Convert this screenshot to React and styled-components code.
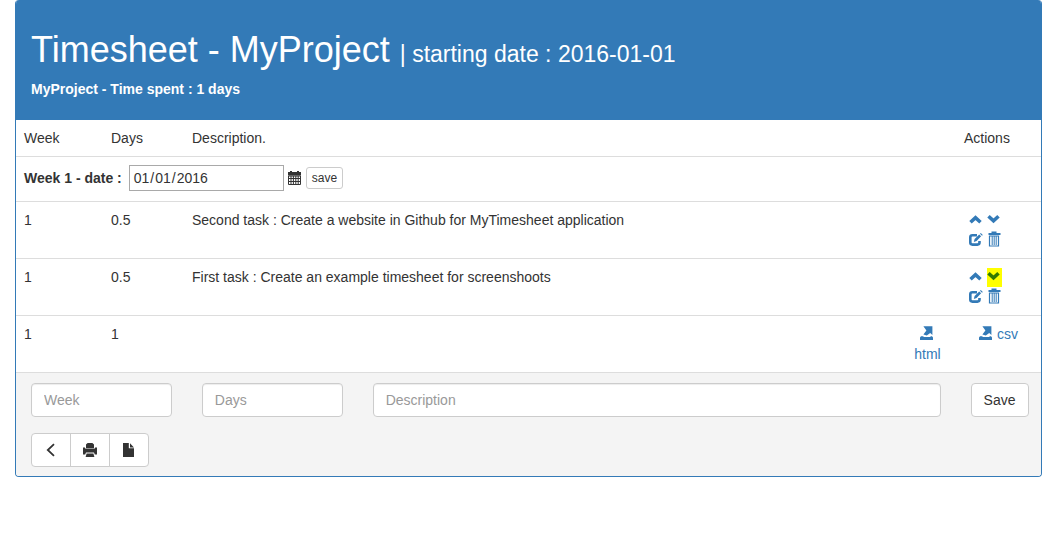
import React from "react";
import styled, { createGlobalStyle } from "styled-components";

const GlobalStyle = createGlobalStyle`
  *, *::before, *::after { box-sizing: border-box; }
  body {
    margin: 0;
    background: #fff;
    color: #333;
    font-family: Arial, "Liberation Sans", sans-serif;
    font-size: 14px;
    line-height: 20px;
  }
  button, input { font: inherit; color: inherit; margin: 0; }
`;

const Panel = styled.main`
  margin: 0 14px 20px 15px;
  border: 1px solid #337ab7;
  border-top: 0;
  border-radius: 4px;
  overflow: hidden;
`;

const Heading = styled.header`
  padding: 30px 15px 21px;
  background: #337ab7;
  color: #fff;
`;

const Title = styled.h1`
  margin: 0 0 10px;
  font-size: 36px;
  line-height: 39px;
  font-weight: 400;
`;

const StartDate = styled.small`
  font-size: 23px;
  line-height: 24px;
`;

const Summary = styled.p`
  margin: 0;
  font-weight: 700;
`;

const Table = styled.table`
  width: 100%;
  table-layout: fixed;
  border-collapse: separate;
  border-spacing: 0;
`;

const Col = styled.col`
  width: ${(p) => p.$width || "auto"};
`;

const Cell = styled.td`
  padding: 8px;
  border-top: 1px solid #ddd;
  text-align: ${(p) => (p.$center ? "center" : "left")};
  vertical-align: top;
`;

const HeadCell = styled.th`
  padding: 8px;
  font-weight: 400;
  text-align: left;
`;

const DateForm = styled.form`
  display: flex;
  align-items: center;
  gap: 4px;
  padding-bottom: 2px;
`;

const DateLabel = styled.label`
  padding-right: 3px;
  font-weight: 700;
`;

const DateInput = styled.input`
  width: 155px;
  height: 26px;
  padding: 0 3px;
  border: 1px solid #a9a9a9;
  background: #fff;
  outline: 0;
  &::-webkit-calendar-picker-indicator { display: none; }
`;

const Button = styled.button`
  padding: 6px 12px;
  border: 1px solid #ccc;
  border-radius: 4px;
  background: #fff;
  white-space: nowrap;
  cursor: pointer;
`;

const SmallButton = styled(Button)`
  padding: 1px 5px;
  border-radius: 3px;
  font-size: 12px;
  line-height: 18px;
`;

const Actions = styled.div`
  display: grid;
  grid-template-columns: 14px 15px;
  grid-auto-rows: 20px;
  align-items: center;
  gap: 0 4px;
  padding-left: 5px;
`;

const IconLink = styled.a`
  display: flex;
  align-items: center;
  height: 19px;
  color: ${(p) => (p.$marked ? "#337a00" : "#337ab7")};
  background: ${(p) => (p.$marked ? "#ff0" : "transparent")};
`;

const ExportLink = styled.a`
  color: #337ab7;
  text-decoration: none;
`;

const Glyph = styled.svg`
  width: 14px;
  height: 14px;
  flex: none;
  overflow: visible;
  vertical-align: -2px;
  fill: currentColor;
`;

const Footer = styled.footer`
  padding: 10px 0 9px;
  border-top: 1px solid #ddd;
  background: #f4f4f4;
`;

const TaskForm = styled.form`
  display: grid;
  grid-template-columns: minmax(0, 2fr) minmax(0, 2fr) minmax(0, 7fr) minmax(0, 1fr);
  margin-bottom: 16px;
`;

const Field = styled.div`
  padding: 0 15px;
`;

const TextInput = styled.input`
  display: block;
  width: 100%;
  height: 34px;
  padding: 6px 12px;
  border: 1px solid #ccc;
  border-radius: 4px;
  background: #fff;
  box-shadow: inset 0 1px 1px rgba(0, 0, 0, 0.075);
  outline: 0;
  &::placeholder { color: #999; opacity: 1; }
`;

const ButtonGroup = styled.div`
  display: flex;
  padding: 0 15px;
`;

const GroupButton = styled(Button)`
  display: flex;
  align-items: center;
  height: 34px;
  border-radius: 0;
  & + & { margin-left: -1px; }
  &:first-child { border-radius: 4px 0 0 4px; }
  &:last-child { border-radius: 0 4px 4px 0; }
`;

const icons = {
  up: <path d="M1.5 9.2 6.5 4.6l5 4.6" fill="none" stroke="currentColor" strokeWidth="3.6" />,
  down: <path d="M1.5 3.2 6.5 7.8l5-4.6" fill="none" stroke="currentColor" strokeWidth="3.6" />,
  edit: (
    <>
      <path
        d="M8 2.2H3.4Q1.3 2.2 1.3 4.2v5.4q0 2 2.1 2h5q2.1 0 2.1-2V8"
        fill="none"
        stroke="currentColor"
        strokeWidth="2.6"
      />
      <path d="M4.8 9 5.6 6l4.6-4.6 1.9 1.9L7.6 8ZM11 .7l.8-.8 2 2-.8.8Z" />
    </>
  ),
  trash: (
    <>
      <path d="M4.5-1.5h5v1.5h4v2h-12v-2h3Z" />
      <path d="M2.5 3h9v10h-9Z" fill="none" stroke="currentColor" strokeWidth="1.2" />
      <path d="M5.2 3v9M7.2 3v9M9.2 3v9" stroke="currentColor" strokeWidth="1" />
    </>
  ),
  export: (
    <>
      <path d="M3.4-.8H12.4V8L10.2 6 6.8 8.4 3.4 7.4 6.4 3.4 5.2 1.8Z" />
      <path d="M1 9.2h2l1 .8h6l1-.8h1l1 1.2V13H0v-2.6Z" />
    </>
  ),
  calendar: (
    <>
      <path d="M0 1h2V0h2v1h5V0h2v1h2v3.4H0Z" />
      <path
        d="M.5 5v8.5h12V5ZM0 7.5h13M0 10.5h13M3 5v8M5.4 5v8M7.8 5v8M10.2 5v8"
        fill="none"
        stroke="currentColor"
        strokeWidth="1"
      />
    </>
  ),
  back: <path d="M10 1.2 3.8 7l6.2 5.8" fill="none" stroke="currentColor" strokeWidth="1.8" />,
  print: (
    <>
      <path d="M4.6 0h4.8L11 1.6V5H3V1.6Z" />
      <path d="M0 4.4h2V5.4h10V4.4h2v7.1h-2.2L11 9.4H3l-.8 2.1H0Z" />
      <path d="M3.6 10.6h6.8l1 3.4H2.6Z" />
    </>
  ),
  file: <path d="M1 0H6.8v5.2H12V14H1ZM8 .3 12 4.4H8Z" />,
};

const Icon = ({ name }) => (
  <Glyph viewBox="0 0 14 14" aria-hidden="true">
    {icons[name]}
  </Glyph>
);

const tasks = [
  {
    week: 1,
    days: 0.5,
    text: "Second task : Create a website in Github for MyTimesheet application",
  },
  {
    week: 1,
    days: 0.5,
    text: "First task : Create an example timesheet for screenshoots",
    marked: true,
  },
];

const TaskRow = ({ task }) => (
  <tr>
    <Cell>{task.week}</Cell>
    <Cell>{task.days}</Cell>
    <Cell colSpan={2}>{task.text}</Cell>
    <Cell>
      <Actions>
        <IconLink href="#up" aria-label="Move up"><Icon name="up" /></IconLink>
        <IconLink href="#down" aria-label="Move down" $marked={task.marked}>
          <Icon name="down" />
        </IconLink>
        <IconLink href="#edit" aria-label="Edit"><Icon name="edit" /></IconLink>
        <IconLink href="#delete" aria-label="Delete"><Icon name="trash" /></IconLink>
      </Actions>
    </Cell>
  </tr>
);

export default function App() {
  return (
    <>
      <GlobalStyle />
      <Panel>
        <Heading>
          <Title>
            Timesheet - MyProject <StartDate>| starting date : 2016-01-01</StartDate>
          </Title>
          <Summary>MyProject - Time spent : 1 days</Summary>
        </Heading>
        <Table>
          <colgroup>
            <Col $width="87px" />
            <Col $width="81px" />
            <Col />
            <Col $width="57px" />
            <Col $width="85px" />
          </colgroup>
          <thead>
            <tr>
              <HeadCell>Week</HeadCell>
              <HeadCell>Days</HeadCell>
              <HeadCell colSpan={2}>Description.</HeadCell>
              <HeadCell>Actions</HeadCell>
            </tr>
          </thead>
          <tbody>
            <tr>
              <Cell colSpan={5}>
                <DateForm onSubmit={(e) => e.preventDefault()}>
                  <DateLabel htmlFor="week-date">Week 1 - date :</DateLabel>
                  <DateInput id="week-date" type="date" defaultValue="2016-01-01" />
                  <Icon name="calendar" />
                  <SmallButton type="submit">save</SmallButton>
                </DateForm>
              </Cell>
            </tr>
            {tasks.map((task) => (
              <TaskRow key={task.text} task={task} />
            ))}
            <tr>
              <Cell>1</Cell>
              <Cell>1</Cell>
              <Cell />
              <Cell $center>
                <ExportLink href="#html"><Icon name="export" /> html</ExportLink>
              </Cell>
              <Cell $center>
                <ExportLink href="#csv"><Icon name="export" /> csv</ExportLink>
              </Cell>
            </tr>
          </tbody>
        </Table>
        <Footer>
          <TaskForm onSubmit={(e) => e.preventDefault()}>
            <Field><TextInput aria-label="Week" placeholder="Week" /></Field>
            <Field><TextInput aria-label="Days" placeholder="Days" /></Field>
            <Field><TextInput aria-label="Description" placeholder="Description" /></Field>
            <Field><Button type="submit">Save</Button></Field>
          </TaskForm>
          <ButtonGroup>
            <GroupButton type="button" aria-label="Back"><Icon name="back" /></GroupButton>
            <GroupButton type="button" aria-label="Print"><Icon name="print" /></GroupButton>
            <GroupButton type="button" aria-label="New file"><Icon name="file" /></GroupButton>
          </ButtonGroup>
        </Footer>
      </Panel>
    </>
  );
}
